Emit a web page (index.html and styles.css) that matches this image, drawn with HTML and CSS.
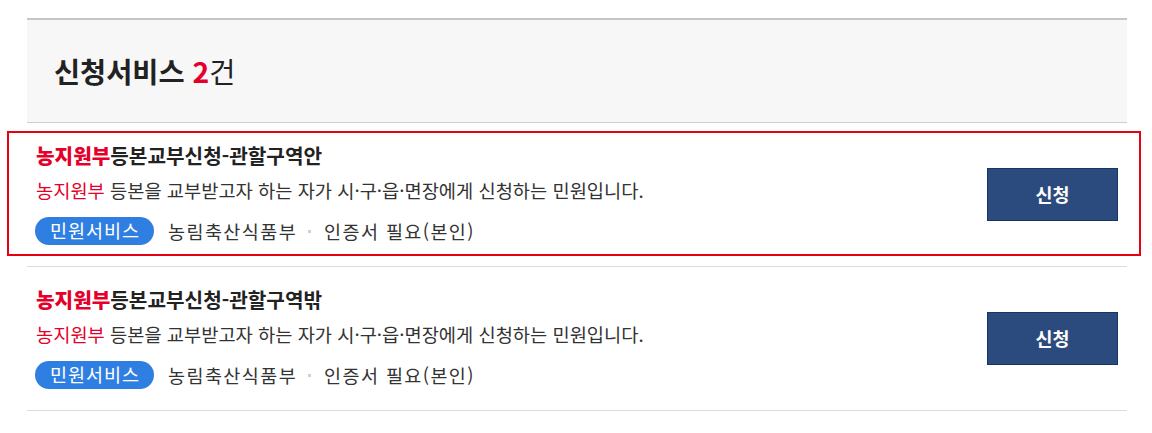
FILE: index.html
```html
<!DOCTYPE html>
<html lang="ko">
<head>
    <meta charset="UTF-8">
    <title>신청서비스</title>
    <link rel="stylesheet" href="styles.css">
</head>
<body>
    <div class="container">
        <header class="result-head">
            <h2>신청서비스 <em>2</em><span>건</span></h2>
        </header>
        <ul class="service-list">
            <li class="service-item focused">
                <div class="service-info">
                    <p class="service-title"><strong>농지원부</strong>등본교부신청-관할구역안</p>
                    <p class="service-desc"><span class="hl">농지원부</span> 등본을 교부받고자 하는 자가 시·구·읍·면장에게 신청하는 민원입니다.</p>
                    <div class="service-meta">
                        <span class="tag">민원서비스</span>
                        <span class="org">농림축산식품부</span>
                        <span class="dot"></span>
                        <span class="cert">인증서 필요(본인)</span>
                    </div>
                </div>
                <a href="#" class="btn-apply">신청</a>
            </li>
            <li class="service-item">
                <div class="service-info">
                    <p class="service-title"><strong>농지원부</strong>등본교부신청-관할구역밖</p>
                    <p class="service-desc"><span class="hl">농지원부</span> 등본을 교부받고자 하는 자가 시·구·읍·면장에게 신청하는 민원입니다.</p>
                    <div class="service-meta">
                        <span class="tag">민원서비스</span>
                        <span class="org">농림축산식품부</span>
                        <span class="dot"></span>
                        <span class="cert">인증서 필요(본인)</span>
                    </div>
                </div>
                <a href="#" class="btn-apply">신청</a>
            </li>
        </ul>
    </div>
</body>
</html>
```

FILE: styles.css
```css
body {
    margin: 0;
    font-family: "Noto Sans CJK KR", "Noto Sans", sans-serif;
    color: #222;
    background: #fff;
}
.container {
    width: 1100px;
    margin: 18px 0 0 27px;
}
.result-head {
    border-top: 2px solid #c6c6c6;
    border-bottom: 1px solid #cfcfcf;
    background-color: #f7f7f7;
    height: 102px;
    display: flex;
    align-items: center;
    padding-left: 27px;
}
.result-head h2 {
    margin: 0;
    font-size: 28.4px;
    font-weight: bold;
    line-height: 32px;
    color: #222;
}
.result-head h2 em {
    font-style: normal;
    color: #e4002b;
}
.result-head h2 span {
    font-weight: normal;
}
.service-list {
    list-style: none;
    margin: 0;
    padding: 0;
}
.service-item {
    position: relative;
    display: flex;
    align-items: center;
    justify-content: space-between;
    height: 143px;
    padding: 0 9px;
    border-bottom: 1px solid #dcdcdc;
}
.service-item.focused::after {
    content: "";
    position: absolute;
    left: -20px;
    right: -14px;
    top: 8px;
    bottom: 10px;
    border: 2px solid #e60012;
    pointer-events: none;
}
.service-info {
    margin-top: -1px;
}
.service-info p {
    margin: 0;
}
.service-title {
    font-size: 20.2px;
    font-weight: bold;
    line-height: 26px;
    color: #222;
}
.service-title strong {
    color: #e4002b;
}
.service-desc {
    margin-top: 9px !important;
    font-size: 18.7px;
    line-height: 24px;
    color: #333;
}
.service-desc .hl {
    color: #e4002b;
}
.service-meta {
    display: flex;
    align-items: center;
    margin-top: 15px;
    font-size: 18.5px;
    color: #333;
}
.tag {
    display: inline-block;
    height: 28px;
    line-height: 27px;
    padding: 0 14px 0 15px;
    border-radius: 14px;
    background-color: #2f7fe3;
    color: #fff;
    letter-spacing: 1px;
    margin-left: -1px;
}
.org, .cert {
    letter-spacing: 1.4px;
}
.org {
    margin-left: 14px;
}
.dot {
    width: 3px;
    height: 3px;
    background-color: #d0d0d0;
    margin: 0 13px 0 11px;
}
.btn-apply {
    display: block;
    width: 129px;
    height: 51px;
    line-height: 51px;
    text-align: center;
    background-color: #2b4a7e;
    border: 1px solid #1a3466;
    color: #fff;
    font-size: 18.5px;
    font-weight: bold;
    text-decoration: none;
}
```
